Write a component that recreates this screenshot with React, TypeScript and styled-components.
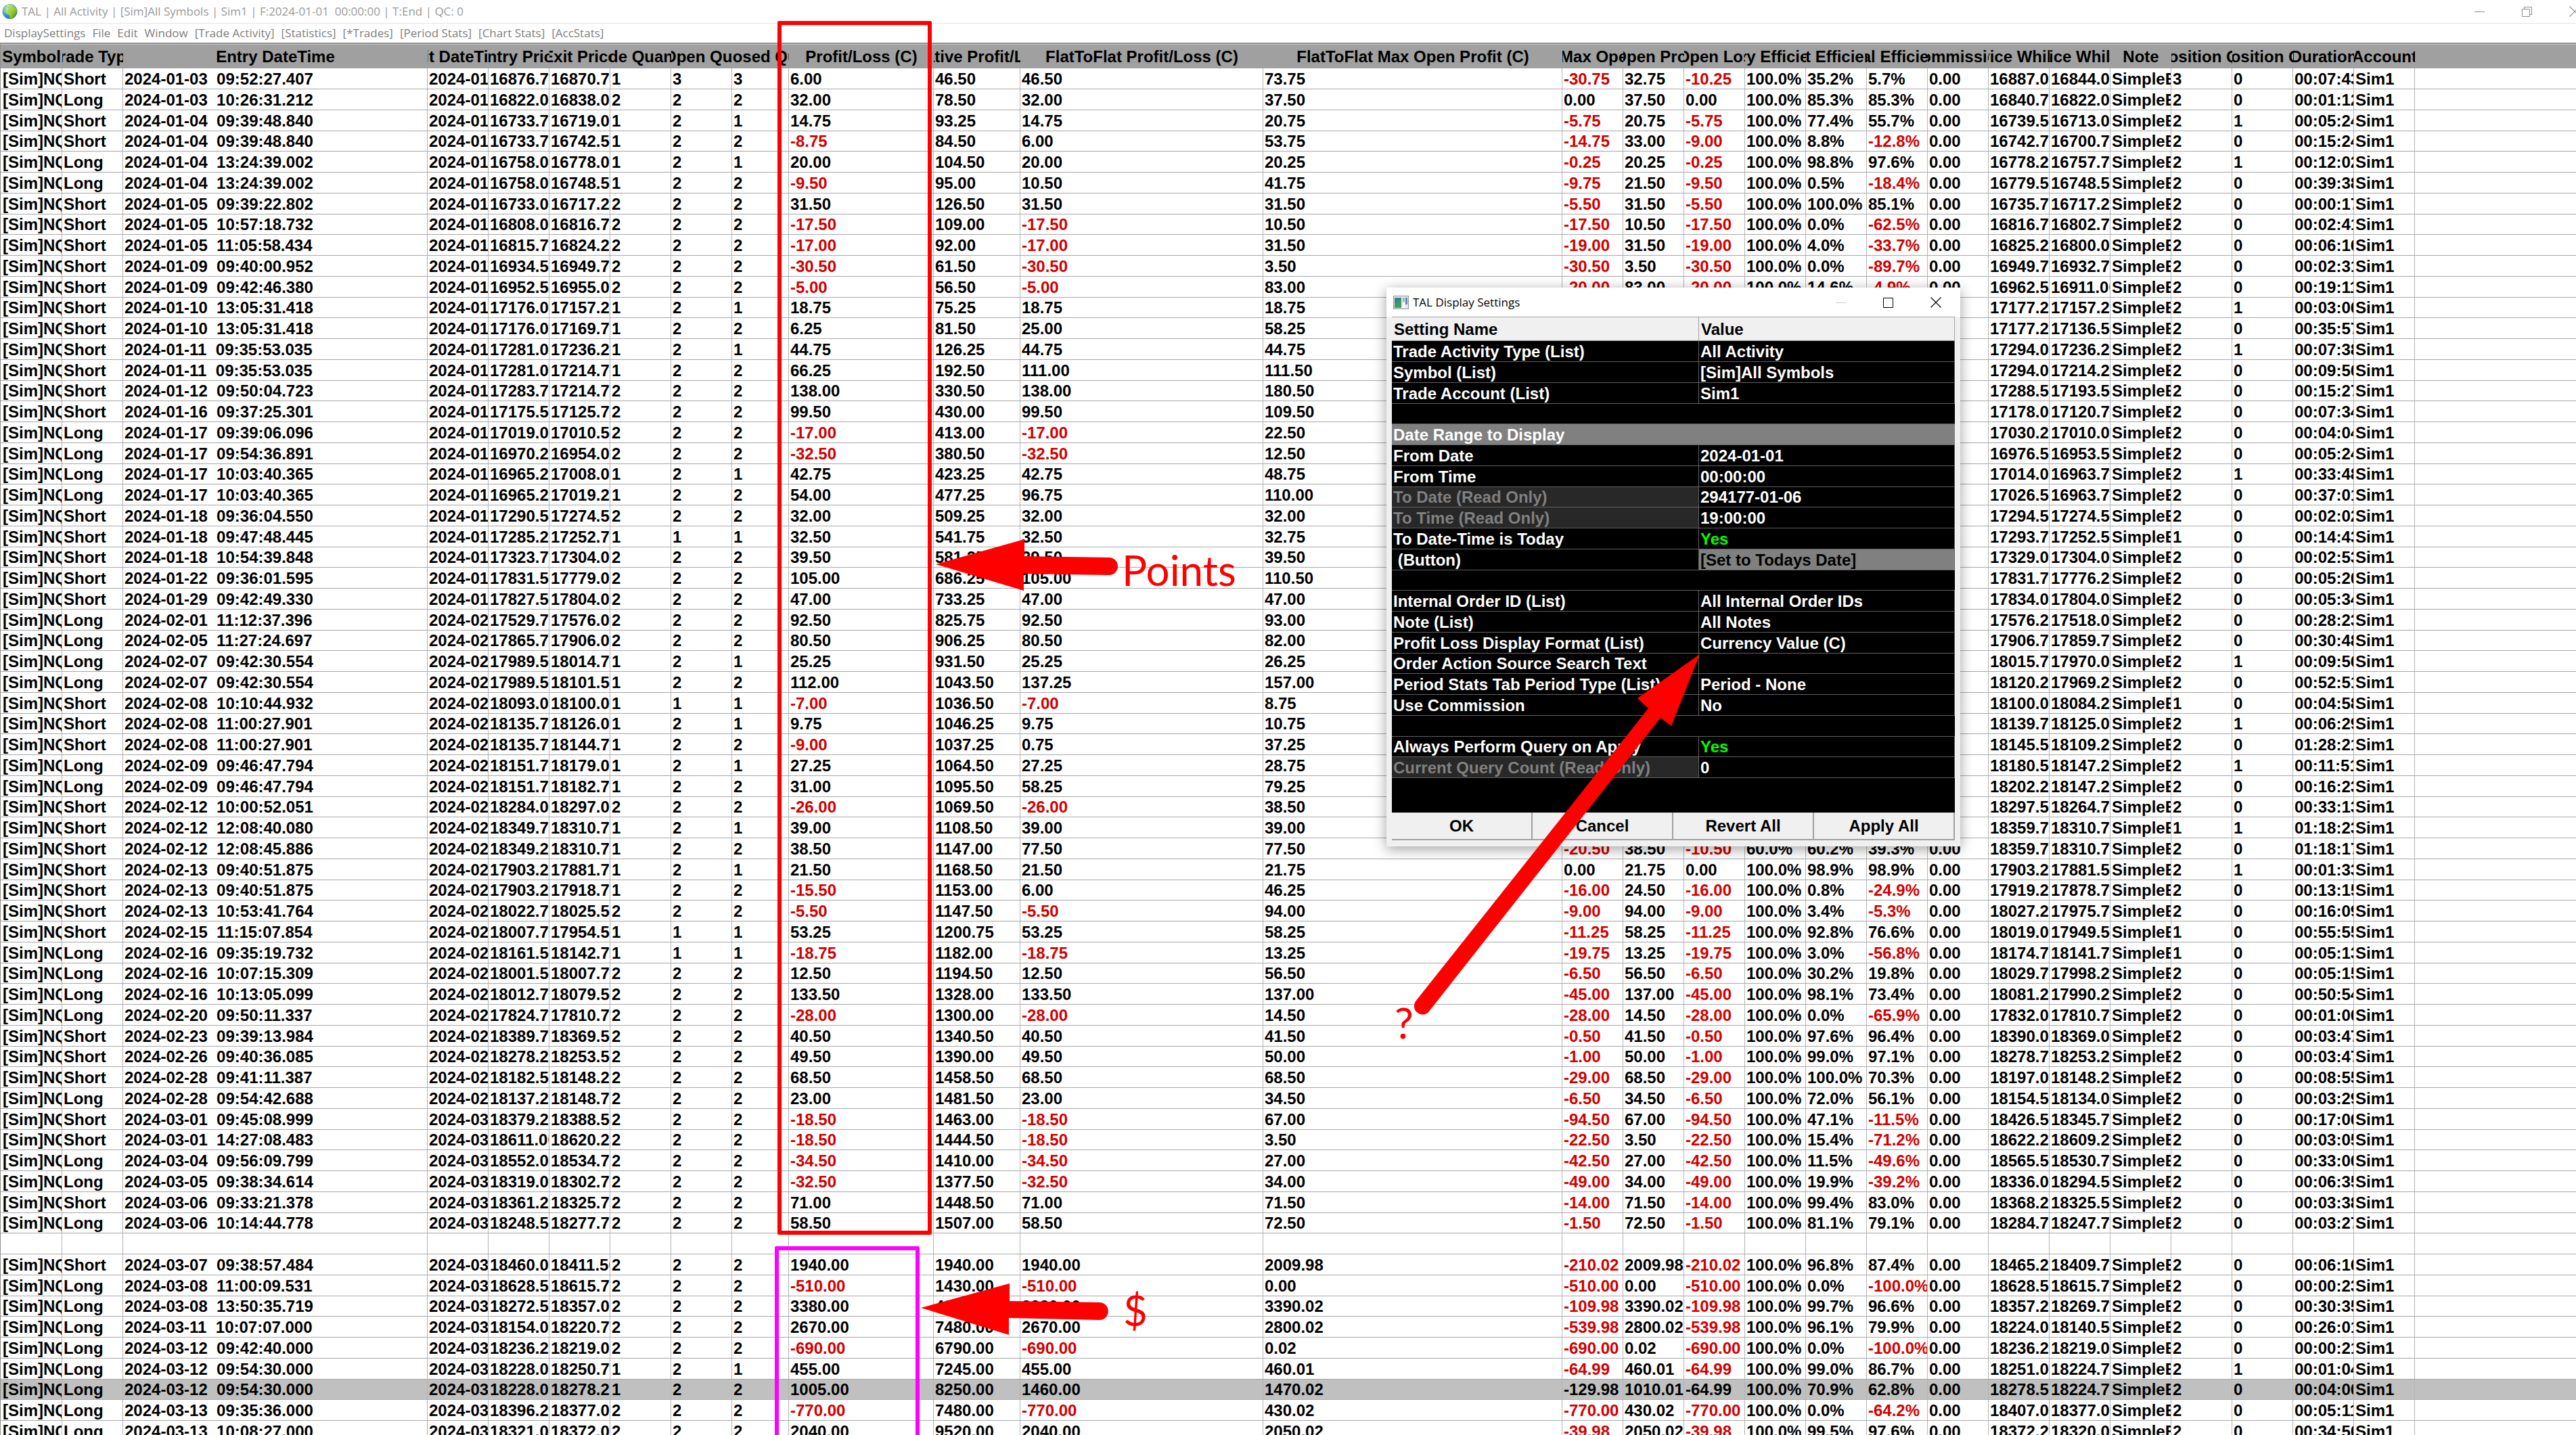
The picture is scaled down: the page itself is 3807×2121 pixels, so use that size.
import React from "react";
import styled, { createGlobalStyle, css } from "styled-components";

const GlobalStyle = createGlobalStyle`
  html, body, #root { height: 100%; }
  body { margin: 0; background: #fff; overflow: hidden; }
  * { box-sizing: border-box; }
  button { font: inherit; color: inherit; background: none; border: 0; padding: 0; margin: 0; }
`;

const GRID_FONT = `"Liberation Sans", Arial, sans-serif`;
const UI_FONT = `"Open Sans", "Noto Sans", sans-serif`;

/* ---------- main window ---------- */

const Window = styled.div`
  position: relative;
  height: 100vh;
  overflow: hidden;
  display: flex;
  flex-direction: column;
  background: #fff;
`;

const TitleBar = styled.header`
  flex: none;
  height: 35px;
  display: flex;
  align-items: center;
  border-bottom: 1px solid #e5e5e5;
  padding-left: 3px;
  color: #999;
  font: 17px/34px ${UI_FONT};
`;

const TitleText = styled.h1`
  flex: 1;
  margin: 0 0 0 6px;
  font: inherit;
  white-space: pre;
`;

const WindowControls = styled.div<{ $color: string }>`
  flex: none;
  display: flex;
  align-items: center;
  gap: 55px;
  color: ${(p) => p.$color};
  button { display: flex; }
`;

const MainControls = styled(WindowControls)`
  margin-right: -6px;
`;

const MenuBar = styled.nav`
  flex: none;
  height: 28px;
  display: flex;
  align-items: center;
  gap: 10px;
  padding-left: 6px;
  color: #808080;
  font: 17px/26px ${UI_FONT};
  white-space: nowrap;
`;

/* ---------- trade grid ---------- */

const GridArea = styled.main`
  flex: 1;
  min-height: 0;
  overflow: hidden;
  border-top: 2px solid #8f8f8f;
  border-left: 1px solid #8f8f8f;
`;

const Grid = styled.table`
  width: 100%;
  table-layout: fixed;
  border-collapse: separate;
  border-spacing: 0;
  font: bold 24px/30px ${GRID_FONT};
  color: #000;
`;

const HeadCell = styled.th`
  height: 36px;
  padding: 0;
  border-top: 1px solid #c8c8c8;
  background: #a0a0a0;
`;

const HeadLabel = styled.div`
  display: flex;
  justify-content: center;
  overflow: hidden;
  white-space: nowrap;
`;

const Row = styled.tr<{ $selected?: boolean }>`
  height: 31px;
  &:nth-child(4n) { height: 30px; }
  td { background: ${(p) => (p.$selected ? "#c0c0c0" : "#fff")}; }
`;

const Cell = styled.td<{ $loss?: boolean }>`
  padding: 0 0 0 2px;
  border-right: 1px solid #b4b4b4;
  border-bottom: 1px solid #a8a8a8;
  overflow: hidden;
  white-space: pre;
  line-height: 29px;
  color: ${(p) => (p.$loss ? "#d00000" : "#000")};
  &:last-child { border-right: 0; }
  &:first-child { padding-left: 3px; }
`;

const COLUMNS: [string, number][] = [
  ["Symbol", 91], ["Trade Type", 90], ["Entry DateTime", 450], ["Exit DateTime", 90],
  ["Entry Price", 90], ["Exit Price", 90], ["Trade Quantity", 90], ["Max Open Quantity", 90],
  ["Max Closed Quantity", 84], ["Profit/Loss (C)", 214], ["Cumulative Profit/Loss (C)", 128],
  ["FlatToFlat Profit/Loss (C)", 359], ["FlatToFlat Max Open Profit (C)", 442],
  ["FlatToFlat Max Open Loss (C)", 90], ["Max Open Profit (C)", 90], ["Max Open Loss (C)", 90],
  ["Entry Efficiency", 90], ["Exit Efficiency", 90], ["Total Efficiency", 90], ["Commission", 90],
  ["High Price While Open", 90], ["Low Price While Open", 90], ["Note", 90],
  ["Open Position Quantity", 90], ["Close Position Quantity", 90], ["Duration", 90], ["Account", 90],
];

/*
 * side | date | time | entry | exit | quantities | P/L | cumulative | flat P/L | flat max |
 * flat loss, open profit, open loss, entry %, exit %, total % | high | low | position | duration
 */
const TRADES = `
Short|2024-01-03|09:52:27.407|16876.75|16870.75|1 3 3|6.00|46.50|46.50|73.75|-30.75 32.75 -10.25 100.0% 35.2% 5.7%|16887.00|16844.00|3 0|00:07:43
Long|2024-01-03|10:26:31.212|16822.00|16838.00|2 2 2|32.00|78.50|32.00|37.50|0.00 37.50 0.00 100.0% 85.3% 85.3%|16840.75|16822.00|2 0|00:01:12
Short|2024-01-04|09:39:48.840|16733.75|16719.00|1 2 1|14.75|93.25|14.75|20.75|-5.75 20.75 -5.75 100.0% 77.4% 55.7%|16739.50|16713.00|2 1|00:05:24
Short|2024-01-04|09:39:48.840|16733.75|16742.50|1 2 2|-8.75|84.50|6.00|53.75|-14.75 33.00 -9.00 100.0% 8.8% -12.8%|16742.75|16700.75|2 0|00:15:24
Long|2024-01-04|13:24:39.002|16758.00|16778.00|1 2 1|20.00|104.50|20.00|20.25|-0.25 20.25 -0.25 100.0% 98.8% 97.6%|16778.25|16757.75|2 1|00:12:02
Long|2024-01-04|13:24:39.002|16758.00|16748.50|1 2 2|-9.50|95.00|10.50|41.75|-9.75 21.50 -9.50 100.0% 0.5% -18.4%|16779.50|16748.50|2 0|00:39:38
Short|2024-01-05|09:39:22.802|16733.00|16717.25|2 2 2|31.50|126.50|31.50|31.50|-5.50 31.50 -5.50 100.0% 100.0% 85.1%|16735.75|16717.25|2 0|00:00:17
Short|2024-01-05|10:57:18.732|16808.00|16816.75|2 2 2|-17.50|109.00|-17.50|10.50|-17.50 10.50 -17.50 100.0% 0.0% -62.5%|16816.75|16802.75|2 0|00:02:41
Short|2024-01-05|11:05:58.434|16815.75|16824.25|2 2 2|-17.00|92.00|-17.00|31.50|-19.00 31.50 -19.00 100.0% 4.0% -33.7%|16825.25|16800.00|2 0|00:06:16
Short|2024-01-09|09:40:00.952|16934.50|16949.75|2 2 2|-30.50|61.50|-30.50|3.50|-30.50 3.50 -30.50 100.0% 0.0% -89.7%|16949.75|16932.75|2 0|00:02:31
Short|2024-01-09|09:42:46.380|16952.50|16955.00|2 2 2|-5.00|56.50|-5.00|83.00|-20.00 83.00 -20.00 100.0% 14.6% -4.9%|16962.50|16911.00|2 0|00:19:11
Short|2024-01-10|13:05:31.418|17176.00|17157.25|1 2 1|18.75|75.25|18.75|18.75||17177.25|17157.25|2 1|00:03:06
Short|2024-01-10|13:05:31.418|17176.00|17169.75|1 2 2|6.25|81.50|25.00|58.25||17177.25|17136.50|2 0|00:35:57
Short|2024-01-11|09:35:53.035|17281.00|17236.25|1 2 1|44.75|126.25|44.75|44.75||17294.00|17236.25|2 1|00:07:38
Short|2024-01-11|09:35:53.035|17281.00|17214.75|1 2 2|66.25|192.50|111.00|111.50||17294.00|17214.25|2 0|00:09:50
Short|2024-01-12|09:50:04.723|17283.75|17214.75|2 2 2|138.00|330.50|138.00|180.50||17288.50|17193.50|2 0|00:15:27
Short|2024-01-16|09:37:25.301|17175.50|17125.75|2 2 2|99.50|430.00|99.50|109.50||17178.00|17120.75|2 0|00:07:34
Long|2024-01-17|09:39:06.096|17019.00|17010.50|2 2 2|-17.00|413.00|-17.00|22.50||17030.25|17010.00|2 0|00:04:04
Long|2024-01-17|09:54:36.891|16970.25|16954.00|2 2 2|-32.50|380.50|-32.50|12.50||16976.50|16953.50|2 0|00:05:24
Long|2024-01-17|10:03:40.365|16965.25|17008.00|1 2 1|42.75|423.25|42.75|48.75||17014.00|16963.75|2 1|00:33:48
Long|2024-01-17|10:03:40.365|16965.25|17019.25|1 2 2|54.00|477.25|96.75|110.00||17026.50|16963.75|2 0|00:37:01
Short|2024-01-18|09:36:04.550|17290.50|17274.50|2 2 2|32.00|509.25|32.00|32.00||17294.50|17274.50|2 0|00:02:02
Short|2024-01-18|09:47:48.445|17285.25|17252.75|1 1 1|32.50|541.75|32.50|32.75||17293.75|17252.50|1 0|00:14:43
Short|2024-01-18|10:54:39.848|17323.75|17304.00|2 2 2|39.50|581.25|39.50|39.50||17329.00|17304.00|2 0|00:02:53
Short|2024-01-22|09:36:01.595|17831.50|17779.00|2 2 2|105.00|686.25|105.00|110.50||17831.75|17776.25|2 0|00:05:20
Short|2024-01-29|09:42:49.330|17827.50|17804.00|2 2 2|47.00|733.25|47.00|47.00||17834.00|17804.00|2 0|00:05:34
Long|2024-02-01|11:12:37.396|17529.75|17576.00|2 2 2|92.50|825.75|92.50|93.00||17576.25|17518.00|2 0|00:28:23
Long|2024-02-05|11:27:24.697|17865.75|17906.00|2 2 2|80.50|906.25|80.50|82.00||17906.75|17859.75|2 0|00:30:48
Long|2024-02-07|09:42:30.554|17989.50|18014.75|1 2 1|25.25|931.50|25.25|26.25||18015.75|17970.00|2 1|00:09:56
Long|2024-02-07|09:42:30.554|17989.50|18101.50|1 2 2|112.00|1043.50|137.25|157.00||18120.25|17969.25|2 0|00:52:51
Short|2024-02-08|10:10:44.932|18093.00|18100.00|1 1 1|-7.00|1036.50|-7.00|8.75||18100.00|18084.25|1 0|00:04:58
Short|2024-02-08|11:00:27.901|18135.75|18126.00|1 2 1|9.75|1046.25|9.75|10.75||18139.75|18125.00|2 1|00:06:29
Short|2024-02-08|11:00:27.901|18135.75|18144.75|1 2 2|-9.00|1037.25|0.75|37.25||18145.50|18109.25|2 0|01:28:21
Long|2024-02-09|09:46:47.794|18151.75|18179.00|1 2 1|27.25|1064.50|27.25|28.75||18180.50|18147.25|2 1|00:11:51
Long|2024-02-09|09:46:47.794|18151.75|18182.75|1 2 2|31.00|1095.50|58.25|79.25||18202.25|18147.25|2 0|00:16:23
Short|2024-02-12|10:00:52.051|18284.00|18297.00|2 2 2|-26.00|1069.50|-26.00|38.50||18297.50|18264.75|2 0|00:33:13
Short|2024-02-12|12:08:40.080|18349.75|18310.75|1 2 1|39.00|1108.50|39.00|39.00||18359.75|18310.75|1 1|01:18:23
Short|2024-02-12|12:08:45.886|18349.25|18310.75|1 2 2|38.50|1147.00|77.50|77.50|-20.50 38.50 -10.50 60.0% 60.2% 39.3%|18359.75|18310.75|2 0|01:18:17
Short|2024-02-13|09:40:51.875|17903.25|17881.75|1 2 1|21.50|1168.50|21.50|21.75|0.00 21.75 0.00 100.0% 98.9% 98.9%|17903.25|17881.50|2 1|00:01:33
Short|2024-02-13|09:40:51.875|17903.25|17918.75|1 2 2|-15.50|1153.00|6.00|46.25|-16.00 24.50 -16.00 100.0% 0.8% -24.9%|17919.25|17878.75|2 0|00:13:15
Short|2024-02-13|10:53:41.764|18022.75|18025.50|2 2 2|-5.50|1147.50|-5.50|94.00|-9.00 94.00 -9.00 100.0% 3.4% -5.3%|18027.25|17975.75|2 0|00:16:09
Short|2024-02-15|11:15:07.854|18007.75|17954.50|1 1 1|53.25|1200.75|53.25|58.25|-11.25 58.25 -11.25 100.0% 92.8% 76.6%|18019.00|17949.50|1 0|00:55:55
Long|2024-02-16|09:35:19.732|18161.50|18142.75|1 1 1|-18.75|1182.00|-18.75|13.25|-19.75 13.25 -19.75 100.0% 3.0% -56.8%|18174.75|18141.75|1 0|00:05:13
Long|2024-02-16|10:07:15.309|18001.50|18007.75|2 2 2|12.50|1194.50|12.50|56.50|-6.50 56.50 -6.50 100.0% 30.2% 19.8%|18029.75|17998.25|2 0|00:05:15
Long|2024-02-16|10:13:05.099|18012.75|18079.50|2 2 2|133.50|1328.00|133.50|137.00|-45.00 137.00 -45.00 100.0% 98.1% 73.4%|18081.25|17990.25|2 0|00:50:54
Long|2024-02-20|09:50:11.337|17824.75|17810.75|2 2 2|-28.00|1300.00|-28.00|14.50|-28.00 14.50 -28.00 100.0% 0.0% -65.9%|17832.00|17810.75|2 0|00:01:00
Short|2024-02-23|09:39:13.984|18389.75|18369.50|2 2 2|40.50|1340.50|40.50|41.50|-0.50 41.50 -0.50 100.0% 97.6% 96.4%|18390.00|18369.00|2 0|00:03:47
Short|2024-02-26|09:40:36.085|18278.25|18253.50|2 2 2|49.50|1390.00|49.50|50.00|-1.00 50.00 -1.00 100.0% 99.0% 97.1%|18278.75|18253.25|2 0|00:03:47
Short|2024-02-28|09:41:11.387|18182.50|18148.25|2 2 2|68.50|1458.50|68.50|68.50|-29.00 68.50 -29.00 100.0% 100.0% 70.3%|18197.00|18148.25|2 0|00:08:55
Long|2024-02-28|09:54:42.688|18137.25|18148.75|2 2 2|23.00|1481.50|23.00|34.50|-6.50 34.50 -6.50 100.0% 72.0% 56.1%|18154.50|18134.00|2 0|00:03:29
Short|2024-03-01|09:45:08.999|18379.25|18388.50|2 2 2|-18.50|1463.00|-18.50|67.00|-94.50 67.00 -94.50 100.0% 47.1% -11.5%|18426.50|18345.75|2 0|00:17:00
Short|2024-03-01|14:27:08.483|18611.00|18620.25|2 2 2|-18.50|1444.50|-18.50|3.50|-22.50 3.50 -22.50 100.0% 15.4% -71.2%|18622.25|18609.25|2 0|00:03:05
Long|2024-03-04|09:56:09.799|18552.00|18534.75|2 2 2|-34.50|1410.00|-34.50|27.00|-42.50 27.00 -42.50 100.0% 11.5% -49.6%|18565.50|18530.75|2 0|00:33:00
Long|2024-03-05|09:38:34.614|18319.00|18302.75|2 2 2|-32.50|1377.50|-32.50|34.00|-49.00 34.00 -49.00 100.0% 19.9% -39.2%|18336.00|18294.50|2 0|00:06:35
Short|2024-03-06|09:33:21.378|18361.25|18325.75|2 2 2|71.00|1448.50|71.00|71.50|-14.00 71.50 -14.00 100.0% 99.4% 83.0%|18368.25|18325.50|2 0|00:03:38
Long|2024-03-06|10:14:44.778|18248.50|18277.75|2 2 2|58.50|1507.00|58.50|72.50|-1.50 72.50 -1.50 100.0% 81.1% 79.1%|18284.75|18247.75|2 0|00:03:27
-
Short|2024-03-07|09:38:57.484|18460.00|18411.50|2 2 2|1940.00|1940.00|1940.00|2009.98|-210.02 2009.98 -210.02 100.0% 96.8% 87.4%|18465.25|18409.75|2 0|00:06:16
Long|2024-03-08|11:00:09.531|18628.50|18615.75|2 2 2|-510.00|1430.00|-510.00|0.00|-510.00 0.00 -510.00 100.0% 0.0% -100.0%|18628.50|18615.75|2 0|00:00:23
Long|2024-03-08|13:50:35.719|18272.50|18357.00|2 2 2|3380.00|4810.00|3380.00|3390.02|-109.98 3390.02 -109.98 100.0% 99.7% 96.6%|18357.25|18269.75|2 0|00:30:35
Long|2024-03-11|10:07:07.000|18154.00|18220.75|2 2 2|2670.00|7480.00|2670.00|2800.02|-539.98 2800.02 -539.98 100.0% 96.1% 79.9%|18224.00|18140.50|2 0|00:26:01
Long|2024-03-12|09:42:40.000|18236.25|18219.00|2 2 2|-690.00|6790.00|-690.00|0.02|-690.00 0.02 -690.00 100.0% 0.0% -100.0%|18236.25|18219.00|2 0|00:00:21
Long|2024-03-12|09:54:30.000|18228.00|18250.75|1 2 1|455.00|7245.00|455.00|460.01|-64.99 460.01 -64.99 100.0% 99.0% 86.7%|18251.00|18224.75|2 1|00:01:04
*Long|2024-03-12|09:54:30.000|18228.00|18278.25|1 2 2|1005.00|8250.00|1460.00|1470.02|-129.98 1010.01 -64.99 100.0% 70.9% 62.8%|18278.50|18224.75|2 0|00:04:00
Long|2024-03-13|09:35:36.000|18396.25|18377.00|2 2 2|-770.00|7480.00|-770.00|430.02|-770.00 430.02 -770.00 100.0% 0.0% -64.2%|18407.00|18377.00|2 0|00:05:11
Long|2024-03-13|10:08:27.000|18321.00|18372.00|2 2 2|2040.00|9520.00|2040.00|2050.02|-39.98 2050.02 -39.98 100.0% 99.5% 97.6%|18372.25|18320.00|2 0|00:34:50
`.trim().split("\n").map(parseTrade);

function parseTrade(line: string): { selected: boolean; cells: string[] } {
  if (line === "-") return { selected: false, cells: Array(27).fill("") };
  const selected = line.startsWith("*");
  const [side, date, time, entry, exit, qty, pl, cum, flat, flatMax, stats, high, low, pos, dur] =
    line.replace("*", "").split("|");
  const six = stats ? stats.split(" ") : Array(6).fill("");
  return {
    selected,
    cells: [
      "[Sim]NQ", side, `${date}  ${time}`, date, entry, exit, ...qty.split(" "),
      pl, cum, flat, flatMax, ...six, "0.00", high, low, "SimpleE", ...pos.split(" "), dur, "Sim1",
    ],
  };
}

const isLoss = (text: string) => text.startsWith("-");

function TradeGrid() {
  return (
    <Grid>
      <colgroup>
        {COLUMNS.map(([name, width]) => (
          <col key={name} style={{ width }} />
        ))}
        <col />
      </colgroup>
      <thead>
        <tr>
          {COLUMNS.map(([name]) => (
            <HeadCell key={name} scope="col"><HeadLabel>{name}</HeadLabel></HeadCell>
          ))}
          <HeadCell aria-hidden="true" />
        </tr>
      </thead>
      <tbody>
        {TRADES.map((trade, r) => (
          <Row key={r} $selected={trade.selected}>
            {trade.cells.map((text, c) => (
              <Cell key={c} $loss={!trade.selected && isLoss(text)}>{text}</Cell>
            ))}
            <Cell />
          </Row>
        ))}
      </tbody>
    </Grid>
  );
}

/* ---------- settings dialog ---------- */

const Dialog = styled.section`
  position: absolute;
  left: 2049px;
  top: 425px;
  width: 848px;
  display: flex;
  flex-direction: column;
  background: #f0f0f0;
  box-shadow: 0 4px 18px rgba(0, 0, 0, 0.38);
`;

const DialogTitle = styled.header`
  height: 43px;
  display: flex;
  align-items: center;
  gap: 6px;
  padding: 0 28px 0 10px;
  background: #fff;
  color: #000;
  font: 17px/43px ${UI_FONT};
  h2 { flex: 1; margin: 0; font: inherit; }
`;

const DialogBody = styled.div`
  display: flex;
  flex-direction: column;
  padding: 0 8px;
`;

const SettingsArea = styled.div`
  background: #000;
  padding-bottom: 51px;
`;

const Settings = styled.table`
  width: 100%;
  table-layout: fixed;
  border-collapse: separate;
  border-spacing: 0;
  font: bold 24px/29px ${GRID_FONT};
  color: #fff;
`;

const SettingHead = styled.th`
  height: 36px;
  padding: 0 0 0 3px;
  text-align: left;
  color: #000;
  background: #f0f0f0;
  border: 1px solid #a0a0a0;
  border-width: 1px 1px 1px 0;
`;

type Kind = "plain" | "readonly" | "section" | "gap" | "yes" | "button";

const SettingRow = styled.tr<{ $kind: Kind }>`
  height: 31px;
  &:nth-child(4n) { height: 30px; }
  td { background: ${(p) => (p.$kind === "section" ? "#808080" : "#000")}; }
`;

const SettingCell = styled.td<{ $kind: Kind; $value?: boolean }>`
  padding: 0 0 0 2px;
  border-bottom: 1px solid #606060;
  border-right: ${(p) => (p.$kind === "gap" || p.$kind === "section" ? "0" : "1px solid #606060")};
  overflow: hidden;
  white-space: pre;
  ${(p) => p.$kind === "readonly" && !p.$value && css`
    &&& { background: #282828; color: #808080; }
  `}
  ${(p) => p.$kind === "yes" && p.$value && css`color: #00ff00;`}
  ${(p) => p.$kind === "button" && p.$value && css`&&& { background: #808080; color: #000; }`}
`;

const CellButton = styled.button`
  display: block;
  width: 100%;
  text-align: left;
`;

const DialogActions = styled.div`
  display: flex;
  height: 41px;
  margin-bottom: 9px;
`;

const ActionButton = styled.button`
  flex: 1;
  background: #f0f0f0;
  border-right: 2px solid #a0a0a0;
  border-bottom: 2px solid #a0a0a0;
  font: bold 24px/38px ${GRID_FONT};
  color: #000;
`;

const SETTINGS: [Kind, string, string][] = [
  ["plain", "Trade Activity Type (List)", "All Activity"],
  ["plain", "Symbol (List)", "[Sim]All Symbols"],
  ["plain", "Trade Account (List)", "Sim1"],
  ["gap", "", ""],
  ["section", "Date Range to Display", ""],
  ["plain", "From Date", "2024-01-01"],
  ["plain", "From Time", "00:00:00"],
  ["readonly", "To Date (Read Only)", "294177-01-06"],
  ["readonly", "To Time (Read Only)", "19:00:00"],
  ["yes", "To Date-Time is Today", "Yes"],
  ["button", " (Button)", "[Set to Todays Date]"],
  ["gap", "", ""],
  ["plain", "Internal Order ID (List)", "All Internal Order IDs"],
  ["plain", "Note (List)", "All Notes"],
  ["plain", "Profit Loss Display Format (List)", "Currency Value (C)"],
  ["plain", "Order Action Source Search Text", ""],
  ["plain", "Period Stats Tab Period Type (List)", "Period - None"],
  ["plain", "Use Commission", "No"],
  ["gap", "", ""],
  ["yes", "Always Perform Query on Apply", "Yes"],
  ["readonly", "Current Query Count (Read Only)", "0"],
];

function SettingsDialog() {
  return (
    <Dialog role="dialog" aria-labelledby="settings-title">
      <DialogTitle>
        <DialogIcon />
        <h2 id="settings-title">TAL Display Settings</h2>
        <WindowControls $color="#000">
          <button aria-label="Minimize"><MinimizeIcon color="#ccc" /></button>
          <button aria-label="Maximize"><MaximizeIcon /></button>
          <button aria-label="Close"><CloseIcon /></button>
        </WindowControls>
      </DialogTitle>
      <DialogBody>
        <SettingsArea>
          <Settings>
            <colgroup><col style={{ width: 454 }} /><col /></colgroup>
            <thead>
              <tr>
                <SettingHead scope="col">Setting Name</SettingHead>
                <SettingHead scope="col">Value</SettingHead>
              </tr>
            </thead>
            <tbody>
              {SETTINGS.map(([kind, name, value], i) =>
                kind === "gap" || kind === "section" ? (
                  <SettingRow key={i} $kind={kind}>
                    <SettingCell $kind={kind} colSpan={2}>{name}</SettingCell>
                  </SettingRow>
                ) : (
                  <SettingRow key={i} $kind={kind}>
                    <SettingCell $kind={kind}>{name}</SettingCell>
                    <SettingCell $kind={kind} $value>
                      {kind === "button" ? <CellButton>{value}</CellButton> : value}
                    </SettingCell>
                  </SettingRow>
                )
              )}
            </tbody>
          </Settings>
        </SettingsArea>
        <DialogActions>
          {["OK", "Cancel", "Revert All", "Apply All"].map((label) => (
            <ActionButton key={label}>{label}</ActionButton>
          ))}
        </DialogActions>
      </DialogBody>
    </Dialog>
  );
}

/* ---------- icons ---------- */

const MinimizeIcon = ({ color = "currentColor" }: { color?: string }) => (
  <svg width="15" height="16" viewBox="0 0 15 16"><path d="M0 8.5H15" stroke={color} /></svg>
);
const MaximizeIcon = () => (
  <svg width="15" height="16" viewBox="0 0 15 16" fill="none"><path d="M.5 1.5h14v14h-14z" stroke="currentColor" /></svg>
);
const RestoreIcon = () => (
  <svg width="15" height="16" viewBox="0 0 15 16" fill="none" stroke="currentColor">
    <path d="M.5 4.5h11v11H.5zM3.500 4.500V1.500H14.500V12.500H11.500" />
  </svg>
);
const CloseIcon = () => (
  <svg width="16" height="16" viewBox="0 0 16 16"><path d="M.5 .5l15 15M15.500 .5l-15 15" stroke="currentColor" strokeWidth="1.200" /></svg>
);
const GlobeIcon = () => (
  <svg width="23" height="24" viewBox="0 0 23 24">
    <defs>
      <radialGradient id="sea" cx="30%" cy="30%" r="80%">
        <stop offset="0" stopColor="#b5e3f7" />
        <stop offset=".5" stopColor="#3c9fd6" />
        <stop offset="1" stopColor="#155a94" />
      </radialGradient>
      <linearGradient id="land" x1="0" y1="0" x2="1" y2="1">
        <stop offset="0" stopColor="#d5ef72" />
        <stop offset=".6" stopColor="#8cc92c" />
        <stop offset="1" stopColor="#3e7d12" />
      </linearGradient>
    </defs>
    <circle cx="11.500" cy="12" r="11" fill="url(#sea)" />
    <path d="M7 2C12 0 20 3 22 10c0 6-3 11-9 13-3-1-1-4-3-6-3-1-5-3-5-6 1-2 4-1 6-2 0-2-3-1-4-3z" fill="url(#land)" />
    <path d="M2 6c2-1 3 0 2 2S2 11 1 10z" fill="#8cc92c" />
  </svg>
);
const DialogIcon = () => (
  <svg width="23" height="20" viewBox="0 0 23 20">
    <rect x=".5" y=".5" width="22" height="19" fill="#e8e8e8" stroke="#8a9499" />
    <rect x="2" y="3" width="10" height="15" fill="#3b7f8c" />
    <path d="M2 18V11l10-6v13z" fill="#3f9a68" />
    <rect x="14" y="3" width="3" height="6" fill="#9fb6c4" />
    <rect x="18" y="3" width="3" height="10" fill="#5a8fa0" />
    <rect x="14" y="11" width="3" height="7" fill="#fff" />
  </svg>
);

/* ---------- hand-drawn annotations over the grid ---------- */

const Frame = styled.div<{ $x: number; $y: number; $w: number; $h: number; $color: string }>`
  position: absolute;
  left: ${(p) => p.$x}px;
  top: ${(p) => p.$y}px;
  width: ${(p) => p.$w}px;
  height: ${(p) => p.$h}px;
  border: 6px solid ${(p) => p.$color};
  border-radius: 2px;
  pointer-events: none;
`;

const Arrows = styled.svg`
  position: absolute;
  left: 0;
  top: 0;
  pointer-events: none;
`;

const Note = styled.span<{ $x: number; $y: number }>`
  position: absolute;
  left: ${(p) => p.$x}px;
  top: ${(p) => p.$y}px;
  color: #ff0000;
  font: 62px/72px Lato, sans-serif;
`;

function Annotations() {
  return (
    <>
      <Frame $x={1149} $y={31} $w={228} $h={1794} $color="#ff0000" />
      <Frame $x={1145} $y={1842} $w={214} $h={400} $color="#ff00ff" />
      <Arrows width="2600" height="2121" viewBox="0 0 2600 2121" fill="#ff0000">
        <path d="M1383 834L1514 797V822L1639 824A12.800 12.800 0 0 1 1639 850L1513 848V873Z" />
        <path d="M1361 1933L1492 1897V1923L1625 1925A12.800 13 0 0 1 1625 1951L1491 1948V1973Z" />
        <path d="M2512 967L2420 1032L2436 1047L2092 1480A12.500 12.500 0 0 0 2111 1496L2454 1061L2470 1073Z" />
      </Arrows>
      <Note $x={1658} $y={806}>Points</Note>
      <Note $x={1660} $y={1900}>$</Note>
      <Note $x={2061} $y={1475}>?</Note>
    </>
  );
}

/* ---------- page ---------- */

const MENU = [
  "DisplaySettings", "File", "Edit", "Window", "[Trade Activity]", "[Statistics]",
  "[*Trades]", "[Period Stats]", "[Chart Stats]", "[AccStats]",
];

export default function App() {
  return (
    <>
      <GlobalStyle />
      <Window>
        <TitleBar>
          <GlobeIcon />
          <TitleText>{"TAL | All Activity | [Sim]All Symbols | Sim1 | F:2024-01-01  00:00:00 | T:End | QC: 0"}</TitleText>
          <MainControls $color="#8c8c8c">
            <button aria-label="Minimize"><MinimizeIcon /></button>
            <button aria-label="Restore"><RestoreIcon /></button>
            <button aria-label="Close"><CloseIcon /></button>
          </MainControls>
        </TitleBar>
        <MenuBar>
          {MENU.map((item) => <button key={item}>{item}</button>)}
        </MenuBar>
        <GridArea><TradeGrid /></GridArea>
        <SettingsDialog />
        <Annotations />
      </Window>
    </>
  );
}
